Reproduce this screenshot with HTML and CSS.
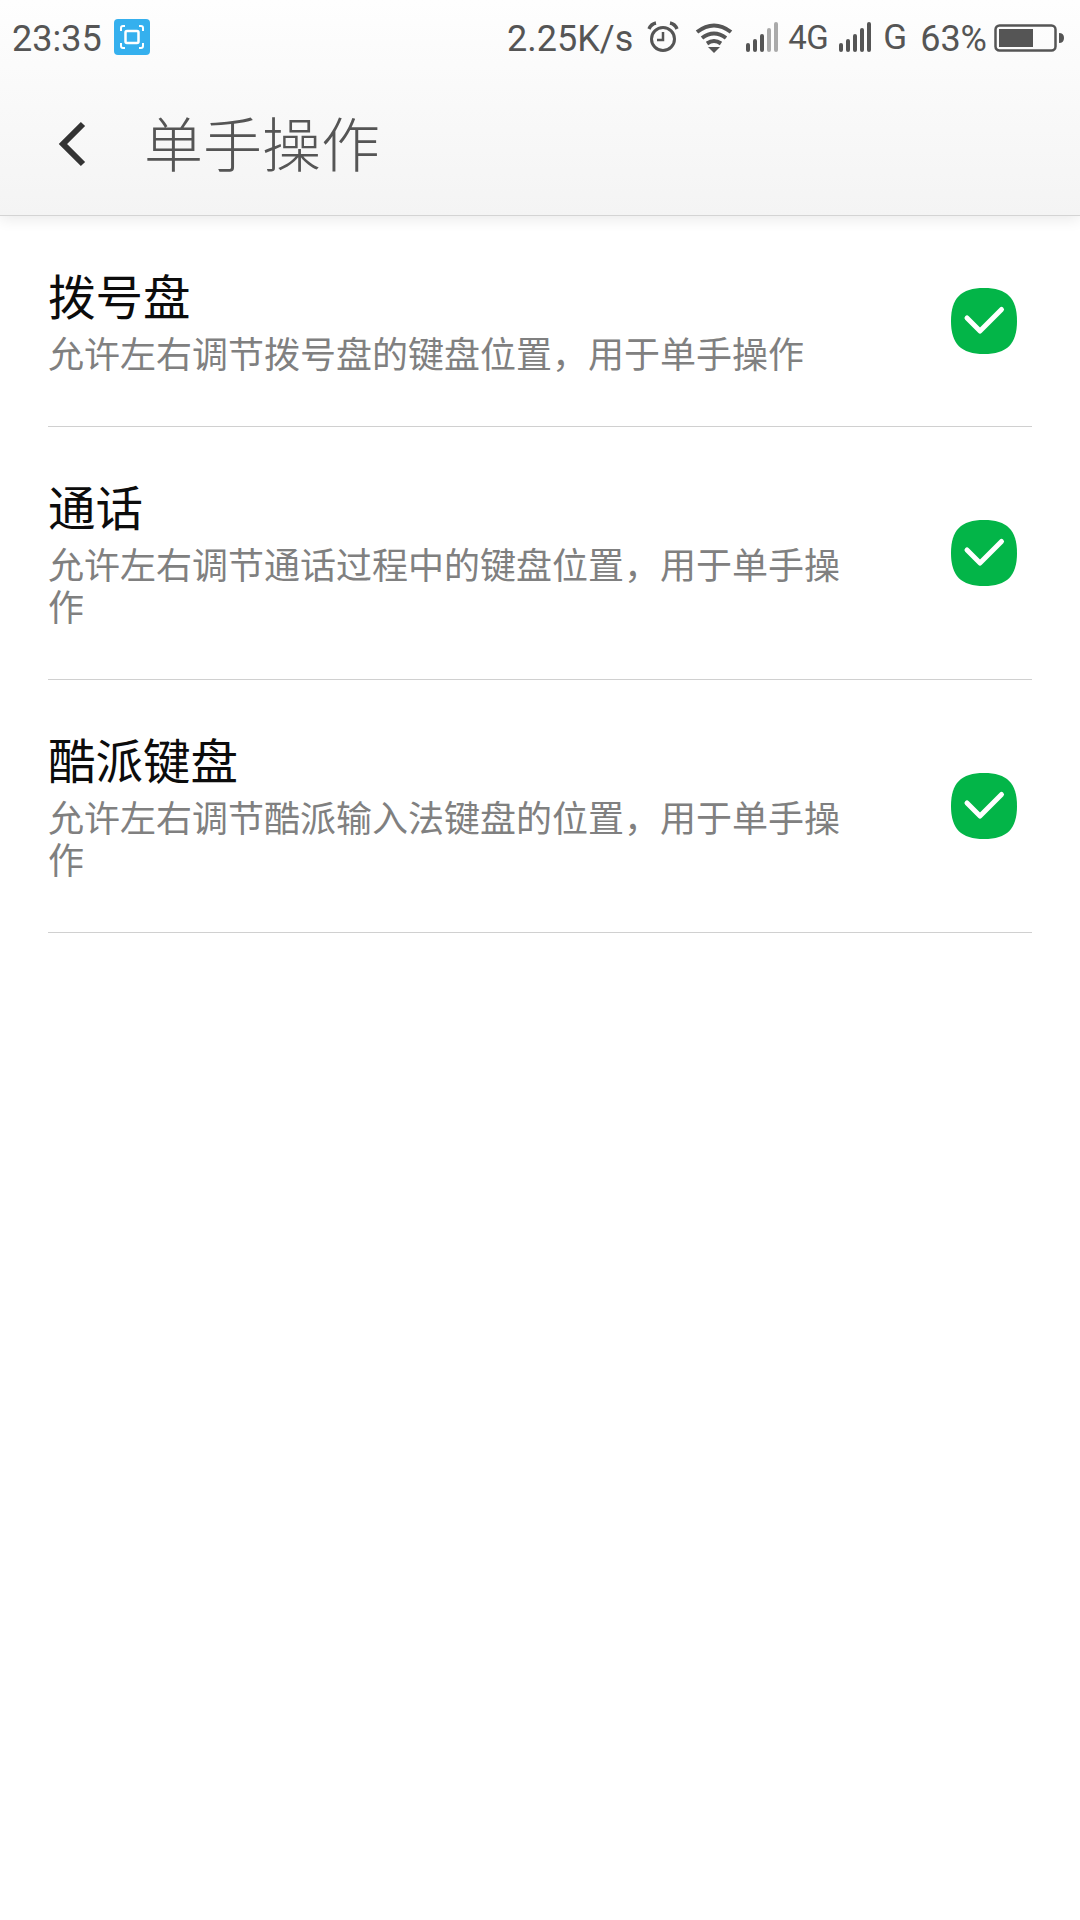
FILE: index.html
```html
<!DOCTYPE html>
<html lang="zh-CN">
<head>
    <meta charset="UTF-8">
    <meta name="viewport" content="width=device-width, initial-scale=1.0">
    <title>单手操作</title>
    <link rel="stylesheet" href="styles.css">
</head>
<body>
<header class="top">
    <div class="status">
        <span class="time">23:35</span>
        <svg class="shot" width="36" height="36" viewBox="0 0 36 36">
            <rect width="36" height="36" rx="4" fill="#35b0ee"/>
            <rect x="11.500" y="12" width="13" height="12" rx="1.500" fill="none" stroke="#fff" stroke-width="2.500"/>
            <path d="M7 12V9q0-2 2-2h2M25 7h2q2 0 2 2v3M29 24v3q0 2-2 2h-2M11 29H9q-2 0-2-2v-3" fill="none" stroke="#fff" stroke-width="2"/>
        </svg>
        <div class="spacer"></div>
        <span class="speed">2.25K/s</span>
        <svg class="alarm" width="32" height="32" viewBox="0 0 32 32" fill="none" stroke="#555">
            <circle cx="16" cy="18" r="11.500" stroke-width="3"/>
            <path d="M16 11v8h-6" stroke-width="2.500"/>
            <path d="M2 8q2-5 7-6M30 8q-2-5-7-6" stroke-width="3.400"/>
        </svg>
        <svg class="wifi" width="38" height="30" viewBox="0 0 38 30" fill="none" stroke="#555" stroke-width="4">
            <path d="M2 9q17-13 34 0M7 15q12-9 24 0M12 20.500q7-5 14 0"/>
            <path d="M13 24h12l-6 6z" fill="#555" stroke="none"/>
        </svg>
        <svg class="bars" width="34" height="32" viewBox="0 0 34 32">
            <rect x="1" y="22" width="4" height="9" rx="2" fill="#555"/>
            <rect x="8" y="18" width="4" height="13" rx="2" fill="#555"/>
            <rect x="15" y="13" width="4" height="18" rx="2" fill="#555"/>
            <rect x="22" y="7" width="4" height="24" rx="2" fill="#aaa"/>
            <rect x="29" y="1" width="4" height="30" rx="2" fill="#aaa"/>
        </svg>
        <span class="net net-4g">4G</span>
        <svg class="bars bars-two" width="34" height="32" viewBox="0 0 34 32">
            <rect x="1" y="22" width="4" height="9" rx="2" fill="#555"/>
            <rect x="8" y="18" width="4" height="13" rx="2" fill="#555"/>
            <rect x="15" y="13" width="4" height="18" rx="2" fill="#555"/>
            <rect x="22" y="7" width="4" height="24" rx="2" fill="#555"/>
            <rect x="29" y="1" width="4" height="30" rx="2" fill="#555"/>
        </svg>
        <span class="net net-g">G</span>
        <span class="percent">63%</span>
        <svg class="battery" width="70" height="28" viewBox="0 0 70 28">
            <rect x="1.500" y="1.500" width="60" height="25" rx="4" fill="none" stroke="#555" stroke-width="2.500"/>
            <rect x="5" y="5" width="34" height="18" fill="#555"/>
            <path d="M65 9q5 0 5 5t-5 5z" fill="#555"/>
        </svg>
    </div>
    <div class="bar">
        <svg class="back" width="32" height="46" viewBox="0 0 32 46">
            <path d="M26 3L6 23l20 20" fill="none" stroke="#333" stroke-width="6"/>
        </svg>
        <h1>单手操作</h1>
    </div>
</header>
<main class="list">
    <div class="row">
        <div class="text">
            <div class="name">拨号盘</div>
            <div class="desc">允许左右调节拨号盘的键盘位置，用于单手操作</div>
        </div>
        <svg class="check" width="66" height="66" viewBox="0 0 66 66">
            <path d="M33 0C56 0 66 10 66 33S56 66 33 66 0 56 0 33 10 0 33 0z" fill="#03b548"/>
            <path d="M16 30l13 13 21.500-21.500" fill="none" stroke="#fff" stroke-width="5" stroke-linecap="round" stroke-linejoin="round"/>
        </svg>
    </div>
    <div class="row">
        <div class="text">
            <div class="name">通话</div>
            <div class="desc">允许左右调节通话过程中的键盘位置，用于单手操作</div>
        </div>
        <svg class="check" width="66" height="66" viewBox="0 0 66 66">
            <path d="M33 0C56 0 66 10 66 33S56 66 33 66 0 56 0 33 10 0 33 0z" fill="#03b548"/>
            <path d="M16 30l13 13 21.500-21.500" fill="none" stroke="#fff" stroke-width="5" stroke-linecap="round" stroke-linejoin="round"/>
        </svg>
    </div>
    <div class="row">
        <div class="text">
            <div class="name">酷派键盘</div>
            <div class="desc">允许左右调节酷派输入法键盘的位置，用于单手操作</div>
        </div>
        <svg class="check" width="66" height="66" viewBox="0 0 66 66">
            <path d="M33 0C56 0 66 10 66 33S56 66 33 66 0 56 0 33 10 0 33 0z" fill="#03b548"/>
            <path d="M16 30l13 13 21.500-21.500" fill="none" stroke="#fff" stroke-width="5" stroke-linecap="round" stroke-linejoin="round"/>
        </svg>
    </div>
</main>
</body>
</html>
```
FILE: styles.css
```css
* {
    box-sizing: border-box;
}
body {
    margin: 0;
    background-color: #fff;
    font-family: Roboto, "Noto Sans CJK SC", sans-serif;
}
.top {
    height: 216px;
    background: linear-gradient(#fefefe, #f4f4f4);
    border-bottom: 1px solid #d4d4d4;
    box-shadow: 0 3px 14px rgba(0, 0, 0, 0.09);
}
.status {
    display: flex;
    align-items: center;
    height: 76px;
    padding-left: 12px;
    color: #555;
    font-size: 36px;
}
.spacer {
    flex: 1;
}
.time,
.speed,
.percent {
    margin-top: 2px;
}
.shot {
    margin-left: 12px;
    margin-top: -2px;
}
.alarm {
    margin-left: 14px;
    margin-top: -2px;
}
.wifi {
    margin-left: 16px;
}
.bars {
    margin-left: 12px;
    margin-top: -2px;
}
.net {
    font-size: 33px;
    margin-top: -1px;
}
.net-4g {
    margin-left: 9px;
    letter-spacing: -0.5px;
}
.bars-two {
    margin-left: 10px;
}
.net-g {
    margin-left: 11px;
    font-size: 35px;
}
.percent {
    margin-left: 13px;
}
.battery {
    margin-left: 7px;
    margin-right: 16px;
    margin-top: -1px;
}
.bar {
    display: flex;
    align-items: center;
    height: 136px;
    padding-left: 57px;
    padding-bottom: 6px;
}
.back {
    flex: none;
    margin-top: 6px;
}
h1 {
    margin: 0 0 0 55px;
    color: #555;
    font-size: 59px;
    font-weight: 300;
}
.row {
    display: flex;
    align-items: center;
    justify-content: space-between;
    margin: 0 48px;
    padding: 55px 15px 49px 0;
    border-bottom: 1px solid #d0d0d0;
}
.text {
    width: 800px;
}
.name {
    margin-bottom: 8px;
    color: #0c0c0c;
    font-size: 47.5px;
    line-height: 56px;
}
.desc {
    color: #808080;
    font-size: 36px;
    line-height: 42px;
}
.check {
    margin-bottom: 6px;
}
```
